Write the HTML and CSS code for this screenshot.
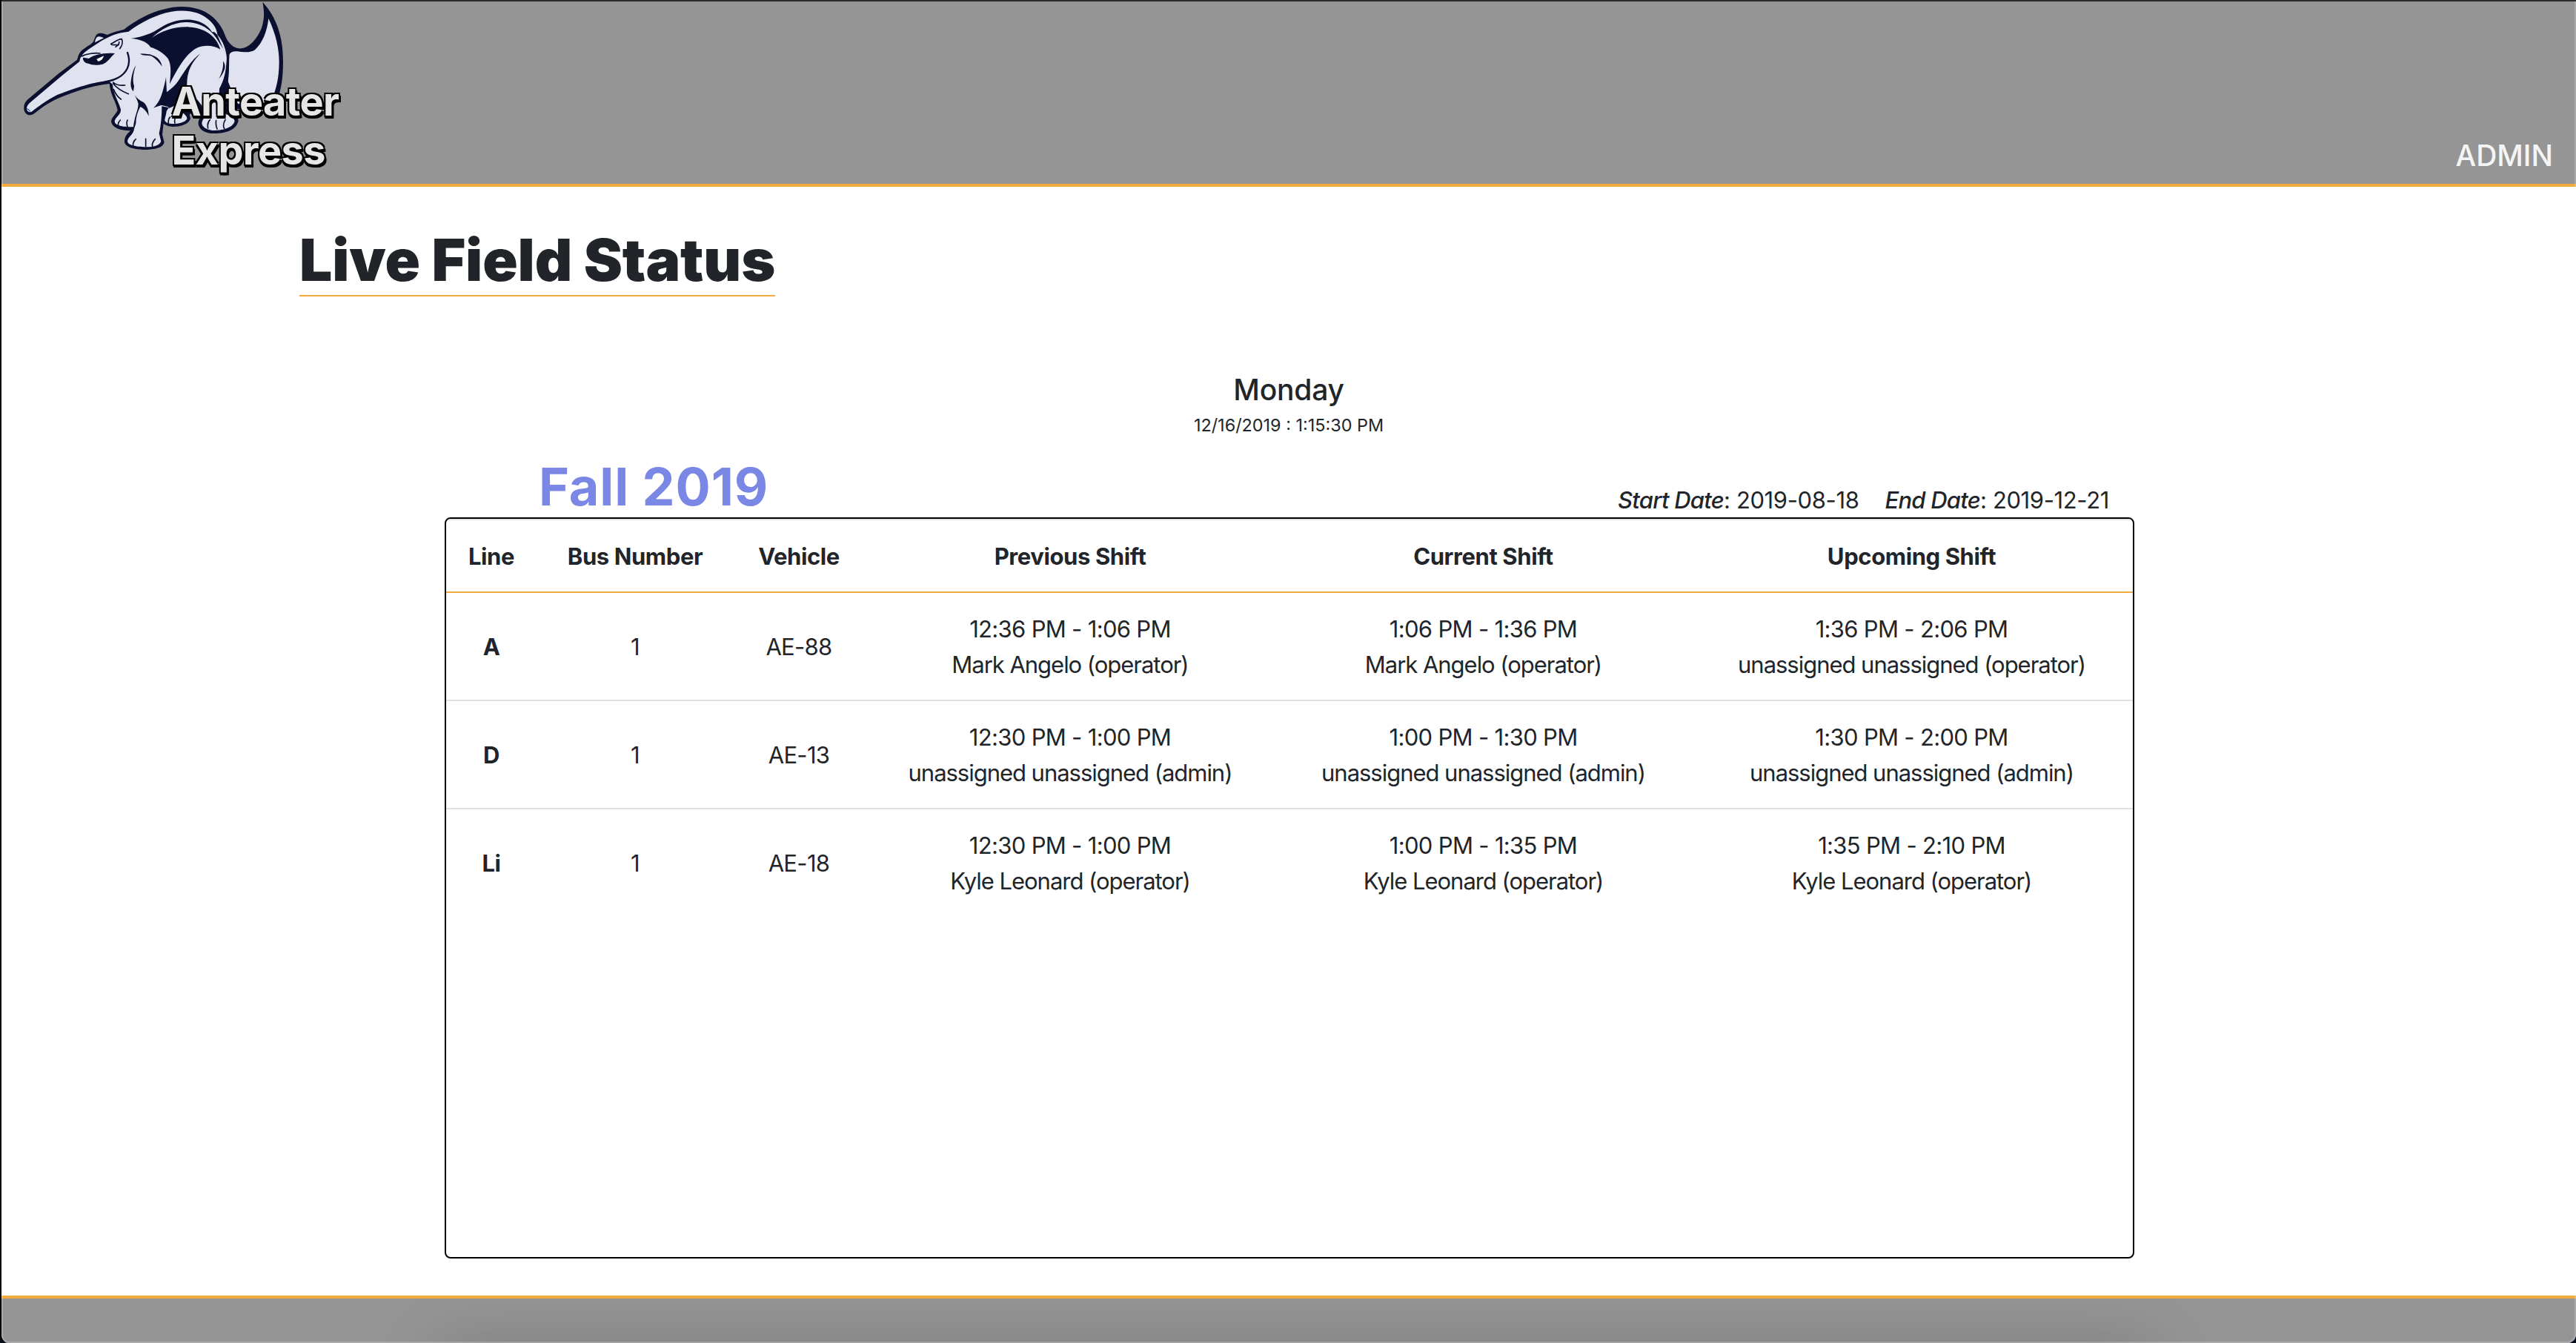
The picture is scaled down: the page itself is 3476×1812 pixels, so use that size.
FILE: index.html
```html
<!DOCTYPE html>
<html lang="en">
<head>
<meta charset="utf-8">
<title>Live Field Status</title>
<link rel="stylesheet" href="styles.css">
</head>
<body>
<div class="window">
  <header class="header">
    <a class="brand">
      <svg class="anteater" viewBox="0 0 1200 620" aria-hidden="true">
        <path class="ink" d="M97 434C98 418 104 411 113 402L238 297L312 242C318 225 318 212 340 197C358 184 372 178 378 168C384 156 386 138 401 135C414 133 424 138 434 141C455 131 480 124 502 119C550 82 610 48 670 36C710 24 765 22 812 40C865 60 895 100 910 140C922 172 940 190 965 196C1010 200 1045 150 1060 110C1070 78 1071 50 1063 8C1120 70 1146 150 1146 245C1146 320 1138 360 1124 400C1080 440 1010 445 958 440L965 488C958 525 915 540 870 540C835 542 800 525 803 495C806 480 812 474 816 462L760 445L771 478C768 500 735 513 700 513C682 511 668 506 662 500L657 545L665 575C660 600 625 604 590 606C560 606 508 600 504 575C503 550 520 538 528 529C495 530 455 520 450 493C450 475 470 462 476 446C470 410 448 390 443 339C370 346 290 375 235 398C195 416 165 438 138 460C115 476 95 458 97 434Z"/>
        <path class="fur" d="M108 440C108 430 113 422 124 413L250 307L322 249C325 220 350 205 378 187C415 162 450 141 490 133L520 128C575 88 635 58 690 48C745 38 800 45 835 72C865 95 877 115 880 140C905 170 915 200 918 235C920 290 905 330 888 360L885 440C900 460 948 470 950 490C945 515 905 528 870 528C842 528 817 515 817 497C820 480 835 470 838 455L800 405L757 370L690 410L700 440C735 450 758 465 757 480C750 498 715 502 695 501C680 500 668 495 668 487C670 470 685 455 682 435L655 430C655 470 652 505 644 540L652 572C645 590 620 594 595 595C560 594 518 590 516 572C518 553 540 545 542 525L540 514C505 515 463 510 464 490C468 472 490 465 489 443C480 410 458 380 456 342L440 326C370 332 280 365 230 385C190 405 150 435 130 451C120 457 109 452 108 440Z"/>
        <path class="fur" d="M384 172C387 157 391 148 400 148C408 148 414 151 420 154C408 160 395 166 384 172ZM1087 75C1118 140 1130 200 1130 250C1130 315 1118 360 1105 390C1080 424 1010 430 965 420C945 400 930 365 923 330C928 300 927 260 928 222C934 208 948 208 962 208C990 212 1014 214 1032 202C1064 172 1081 127 1087 75Z"/>
        <path class="ink" d="M530 156C575 150 615 136 650 112C690 86 730 76 775 80C818 85 850 108 862 137C832 105 795 90 750 90C700 92 650 118 615 153C655 125 700 110 755 109C825 110 875 142 892 200C865 182 825 180 795 195C755 218 725 265 687 340C692 290 694 262 680 237C664 215 636 199 610 191C595 169 563 157 530 156Z"/>
        <path class="ink" d="M811 217C780 250 755 285 757 345L765 385L815 430L828 462L770 460L762 480C750 460 735 450 715 440L700 455L680 432L655 426C645 427 633 433 621 437C645 415 655 385 661 360C667 340 670 325 672 312L675 373C700 355 717 338 731 313C758 270 780 240 811 217Z"/>
        <path class="ink" d="M918 232L928 222L923 330L960 420L925 460L905 400L888 360C908 325 916 285 918 232ZM903 247C912 260 914 275 905 290C900 302 893 311 886 319C896 300 906 275 903 247Z"/>
        <path class="fur" d="M674 450C672 470 665 482 668 490C680 500 735 504 757 482C758 465 725 452 712 425L680 440Z"/>
        <path class="ink" d="M545 385C554 398 565 407 580 413C594 424 602 445 602 470C594 450 580 437 568 432C556 455 550 475 550 500L540 530L528 528L540 513C544 470 560 445 560 420C556 405 550 395 545 385ZM550 265C538 300 536 330 543 348L540 370C530 360 528 345 530 330C534 300 540 280 550 265ZM567 217C590 219 605 218 620 225C640 232 652 247 656 269C643 250 630 238 614 227C598 223 580 228 567 217ZM336 233C345 234 350 234 359 237C380 222 420 212 465 216C445 233 438 252 415 260C390 266 370 262 358 257C345 256 334 245 336 233Z"/>
        <path class="glint" d="M391 239L420 226C418 238 408 248 397 248Z"/>
        <path class="line thick" d="M516 213C530 250 520 285 490 307C470 322 452 326 425 331"/>
        <path class="line" d="M449 178C465 170 475 159 493 158C498 172 493 188 485 197M482 170C484 180 475 185 468 190M452 181L480 182M330 228C350 217 385 213 405 216M458 333C470 345 485 347 506 345M458 338C475 360 495 370 520 380M460 362C467 380 473 390 490 402M487 486C478 495 477 504 480 511M516 486C512 495 513 505 516 513M550 563C539 572 537 585 540 592M590 562V592M628 563C618 574 615 585 617 593M689 474C682 480 681 490 682 498M712 473C707 480 706 490 708 498M850 485C840 495 840 510 842 519M875 488C873 500 875 513 879 522M912 484C905 497 903 512 908 520"/>
        <path class="ink" d="M868 130L880 142L915 225L905 200L875 153L857 130Z"/>
        <path class="tip" d="M109 440L116 444L122 451"/>
      </svg>
      <span class="wordmark">Anteater<br>Express</span>
    </a>
    <a class="admin">ADMIN</a>
  </header>

  <main class="main">
    <h1 class="title">Live Field Status</h1>
    <section class="clock">
      <h4 class="day">Monday</h4>
      <div class="time">12/16/2019 : 1:15:30 PM</div>
    </section>
    <section class="schedule">
      <div class="schedule-head">
        <h2 class="quarter">Fall 2019</h2>
        <div class="dates">
          <span><em>Start Date</em>: 2019-08-18</span>
          <span><em>End Date</em>: 2019-12-21</span>
        </div>
      </div>
      <div class="board">
        <table class="shifts">
          <colgroup><col class="c-line"><col class="c-bus"><col class="c-vehicle"><col class="c-prev"><col class="c-current"><col class="c-next"></colgroup>
          <thead>
            <tr><th>Line</th><th>Bus Number</th><th>Vehicle</th><th>Previous Shift</th><th>Current Shift</th><th>Upcoming Shift</th></tr>
          </thead>
          <tbody>
            <tr>
              <th>A</th><td>1</td><td>AE-88</td>
              <td>12:36 PM - 1:06 PM<div class="operator">Mark Angelo (operator)</div></td>
              <td>1:06 PM - 1:36 PM<div class="operator">Mark Angelo (operator)</div></td>
              <td>1:36 PM - 2:06 PM<div class="operator">unassigned unassigned (operator)</div></td>
            </tr>
            <tr>
              <th>D</th><td>1</td><td>AE-13</td>
              <td>12:30 PM - 1:00 PM<div class="operator">unassigned unassigned (admin)</div></td>
              <td>1:00 PM - 1:30 PM<div class="operator">unassigned unassigned (admin)</div></td>
              <td>1:30 PM - 2:00 PM<div class="operator">unassigned unassigned (admin)</div></td>
            </tr>
            <tr>
              <th>Li</th><td>1</td><td>AE-18</td>
              <td>12:30 PM - 1:00 PM<div class="operator">Kyle Leonard (operator)</div></td>
              <td>1:00 PM - 1:35 PM<div class="operator">Kyle Leonard (operator)</div></td>
              <td>1:35 PM - 2:10 PM<div class="operator">Kyle Leonard (operator)</div></td>
            </tr>
          </tbody>
        </table>
      </div>
    </section>
  </main>
  <footer class="footer"></footer>
</div>
</body>
</html>
```
FILE: styles.css
```css
* { box-sizing: border-box; }
html, body { margin: 0; height: 100%; }
body {
  background: #060d18;
  color: #212529;
  font: 400 31px/48px Inter, "Liberation Sans", sans-serif;
}
h1, h2, h4 { margin: 0; }

.window {
  position: relative;
  display: flex;
  flex-direction: column;
  width: 3476px;
  height: 1812px;
  overflow: hidden;
  background: #fff;
  border-left: 2px solid #050505;
  border-radius: 0 0 12px 12px;
}
/* light rim along the window's edges */
.window::after {
  content: "";
  position: absolute;
  inset: 2px 0 0;
  border: 2px solid rgba(255, 255, 255, .2);
  border-top: 0;
  border-radius: 0 0 12px 10px;
  pointer-events: none;
}

.header {
  display: flex;
  justify-content: space-between;
  align-items: flex-end;
  height: 252px;
  background: #959595;
  border-top: 2px solid #2b2b2b;
  border-bottom: 4px solid #f4a93b;
}
.brand { position: relative; align-self: flex-start; }
.anteater { display: block; width: 400px; height: 206.67px; margin: -2px 0 0 -2px; }
.ink { fill: #0c1030; }
.fur { fill: #e0e3ef; }
.glint { fill: #fff; }
.line { fill: none; stroke: #0c1030; stroke-width: 5; stroke-linecap: round; stroke-linejoin: round; }
.thick { stroke-width: 7; }
.tip { fill: none; stroke: #1f6aa8; stroke-width: 4; }
.wordmark {
  position: absolute;
  left: 229.5px;
  top: 102px;
  color: #e6e6e6;
  font-size: 54px;
  font-weight: 650;
  line-height: 66px;
  letter-spacing: -.6px;
  text-shadow: -2px -2px #000, 2px -2px #000, -2px 2px #000, -1px 4px #000, 3px 4px #000, 3px 2px #000;
}
.admin {
  padding: 0 31px 0 0;
  margin-bottom: -2px;
  color: #f5f5f5;
  font-size: 39px;
  font-weight: 500;
  line-height: 80px;
}

.main { flex: 1; padding-top: 52px; }
.title {
  width: 642px;
  margin-left: 402px;
  border-bottom: 2px solid #f4a93b;
  font-size: 78.4px;
  font-weight: 900;
  line-height: 94px;
  letter-spacing: -.1px;
  white-space: nowrap;
}
.clock { padding-top: 102px; text-align: center; }
.day { font-size: 39px; font-weight: 550; line-height: 48px; letter-spacing: -.2px; }
.time { margin-top: 6px; font-size: 23.4px; line-height: 36px; }

.schedule { width: 2280px; margin: 23px 0 0 598px; }
.schedule-head {
  display: flex;
  justify-content: space-between;
  align-items: flex-end;
  padding: 0 34px 0 127px;
}
.quarter { color: #7b87e4; font-size: 70px; font-weight: 750; line-height: 83px; letter-spacing: .9px; }
.dates { display: flex; gap: 35px; line-height: 46px; letter-spacing: -.37px; }
.dates em { font-weight: 550; letter-spacing: -.78px; }

.board { height: 1000px; border: 2px solid #000; border-radius: 8px; overflow: hidden; }
.shifts {
  width: 100%;
  table-layout: fixed;
  border-collapse: separate;
  border-spacing: 0;
  text-align: center;
  letter-spacing: -.68px;
}
.c-line { width: 122px; }
.c-bus { width: 266px; }
.c-vehicle { width: 176px; }
.c-prev { width: 556px; }
.c-current { width: 559px; }
.shifts th, .shifts td { padding: 25px 0 23px; border-top: 2px solid #dee2e6; vertical-align: middle; }
.shifts th { font-weight: 700; letter-spacing: -.4px; }
.shifts thead th { border-bottom: 2px solid #f4a93b; }
.shifts tbody tr:first-child > * { border-top: 0; }
.operator { letter-spacing: -1.03px; }

.footer {
  position: relative;
  height: 64px;
  overflow: hidden;
  background: #959595;
  border-top: 4px solid #f4a93b;
}
/* shadow cast from below the footer */
.footer::after {
  content: "";
  position: absolute;
  left: 588px;
  right: 570px;
  top: 66px;
  height: 100px;
  box-shadow: 0 0 90px rgba(0, 0, 0, .18);
}
```
